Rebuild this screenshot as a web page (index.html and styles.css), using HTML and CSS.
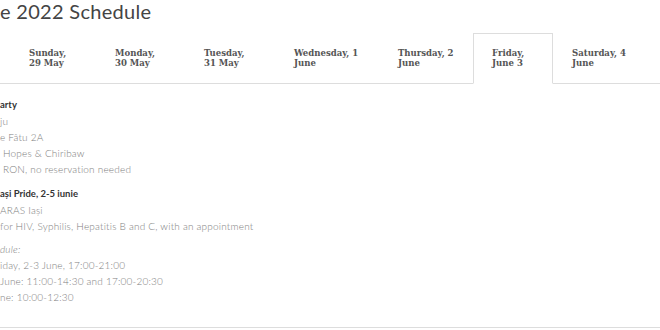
FILE: index.html
```html
<!DOCTYPE html>
<html lang="en">
<head>
    <meta http-equiv="Content-Type" content="text/html; charset=utf-8" />
    <title>Schedule</title>
    <link rel="stylesheet" href="styles.css">
</head>
<body>
    <h1 class="page-title">e 2022 Schedule</h1>

    <div class="tabs">
        <div class="tab">Sunday,<br>29 May</div>
        <div class="tab">Monday,<br>30 May</div>
        <div class="tab">Tuesday,<br>31 May</div>
        <div class="tab">Wednesday, 1<br>June</div>
        <div class="tab">Thursday, 2<br>June</div>
        <div class="tab active">Friday,<br>June 3</div>
        <div class="tab">Saturday, 4<br>June</div>
    </div>

    <div class="day-panel">
        <div class="event">
            <p class="event-title">arty</p>
            <p>ju</p>
            <p>e Fâtu 2A</p>
            <p>&nbsp;Hopes &amp; Chiribaw</p>
            <p>&nbsp;RON, no reservation needed</p>
        </div>
        <div class="event">
            <p class="event-title">ași Pride, 2-5 iunie</p>
            <p>ARAS Iași</p>
            <p>for HIV, Syphilis, Hepatitis B and C, with an appointment</p>
            <p class="schedule-label">dule:</p>
            <p>iday, 2-3 June, 17:00-21:00</p>
            <p>June: 11:00-14:30 and 17:00-20:30</p>
            <p>ne: 10:00-12:30</p>
        </div>
    </div>
</body>
</html>
```

FILE: styles.css
```css
body {
    margin: 0;
    background-color: #ffffff;
    font-family: Lato, "Open Sans", sans-serif;
    overflow: hidden;
}

.page-title {
    margin: 0;
    font-size: 20px;
    line-height: 22px;
    font-weight: 400;
    letter-spacing: 0.3px;
    color: #444444;
    white-space: nowrap;
}

.tabs {
    display: grid;
    grid-template-columns: 86px 89px 90px 104px 94px 80px 1fr;
    margin-top: 11px;
    padding-left: 10px;
    border-bottom: 1px solid #dddddd;
}

.tab {
    padding: 14px 18px 15px;
    margin-bottom: -1px;
    font-family: "DejaVu Serif Condensed", "DejaVu Serif", serif;
    font-weight: bold;
    font-size: 9.5px;
    line-height: 10px;
    color: #555555;
    border: 1px solid transparent;
    border-bottom: none;
    white-space: nowrap;
}

.tab.active {
    border-color: #dddddd;
    background-color: #ffffff;
    border-bottom: 1px solid #ffffff;
}

.day-panel {
    padding-top: 13px;
    height: 230px;
    border-bottom: 1px solid #dddddd;
}

.event {
    margin-bottom: 9px;
}

.event p {
    margin: 0;
    font-size: 10px;
    line-height: 16px;
    font-weight: 300;
    letter-spacing: 0.2px;
    color: #7e7e7e;
    white-space: nowrap;
}

.event .event-title {
    font-size: 9.5px;
    font-weight: bold;
    letter-spacing: 0;
    color: #333333;
}

.event .schedule-label {
    margin-top: 7px;
    font-style: italic;
}
```
